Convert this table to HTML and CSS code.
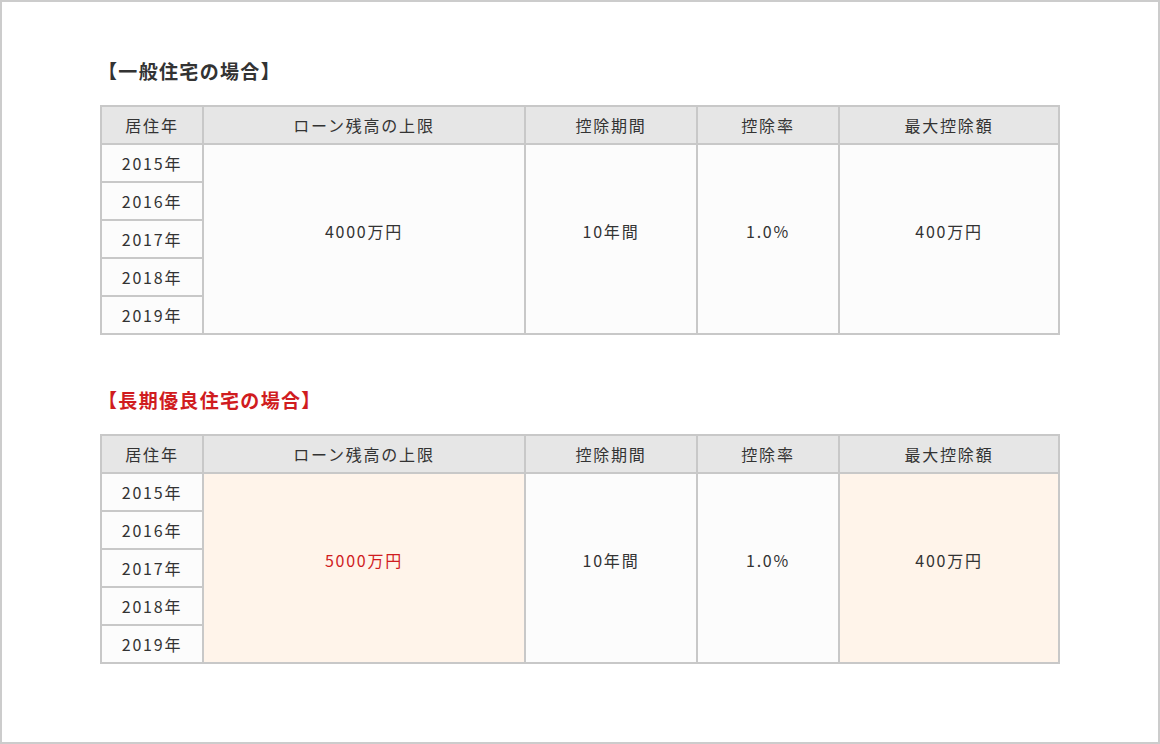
FILE: index.html
```html
<!DOCTYPE html>
<html lang="ja">
<head>
<meta charset="utf-8">
<title>住宅ローン控除</title>
<link rel="stylesheet" href="styles.css">
</head>
<body>
<div class="frame">
  <section class="block">
    <h2 class="title">【一般住宅の場合】</h2>
    <table class="loan">
      <colgroup>
        <col class="c1"><col class="c2"><col class="c3"><col class="c4"><col class="c5">
      </colgroup>
      <thead>
        <tr><th>居住年</th><th>ローン残高の上限</th><th>控除期間</th><th>控除率</th><th>最大控除額</th></tr>
      </thead>
      <tbody>
        <tr><td>2015年</td><td class="span" rowspan="5">4000万円</td><td class="span" rowspan="5">10年間</td><td class="span" rowspan="5">1.0%</td><td class="span" rowspan="5">400万円</td></tr>
        <tr><td>2016年</td></tr>
        <tr><td>2017年</td></tr>
        <tr><td>2018年</td></tr>
        <tr><td>2019年</td></tr>
      </tbody>
    </table>
  </section>
  <section class="block">
    <h2 class="title red">【長期優良住宅の場合】</h2>
    <table class="loan">
      <colgroup>
        <col class="c1"><col class="c2"><col class="c3"><col class="c4"><col class="c5">
      </colgroup>
      <thead>
        <tr><th>居住年</th><th>ローン残高の上限</th><th>控除期間</th><th>控除率</th><th>最大控除額</th></tr>
      </thead>
      <tbody>
        <tr><td>2015年</td><td class="span hl red" rowspan="5">5000万円</td><td class="span" rowspan="5">10年間</td><td class="span" rowspan="5">1.0%</td><td class="span hl" rowspan="5">400万円</td></tr>
        <tr><td>2016年</td></tr>
        <tr><td>2017年</td></tr>
        <tr><td>2018年</td></tr>
        <tr><td>2019年</td></tr>
      </tbody>
    </table>
  </section>
</div>
</body>
</html>
```

FILE: styles.css
```css
html, body {
  margin: 0;
  padding: 0;
  background: #fff;
}
body {
  font-family: "Noto Sans CJK JP", "Noto Sans", sans-serif;
  color: #333;
}
.frame {
  box-sizing: border-box;
  width: 1160px;
  height: 744px;
  border: 2px solid #cccccc;
  padding: 55px 0 0 98px;
}
.block {
  margin-bottom: 51px;
}
.title {
  margin: 0 0 20px -2px;
  font-size: 19px;
  line-height: 28px;
  font-weight: 700;
  letter-spacing: 0.07em;
  color: #333;
}
.title.red {
  color: #d01c1f;
}
.loan {
  width: 960px;
  table-layout: fixed;
  border-collapse: collapse;
  font-size: 16px;
  letter-spacing: 0.11em;
}
.c1 { width: 102px; }
.c2 { width: 322px; }
.c3 { width: 172px; }
.c4 { width: 142px; }
.c5 { width: 220px; }
.loan th,
.loan td {
  border: 2px solid #c8c8c8;
  height: 38px;
  padding: 0;
  text-align: center;
  vertical-align: middle;
  line-height: 20px;
  box-sizing: border-box;
}
.loan th {
  background: #e6e6e6;
  font-weight: 400;
}
.loan td {
  background: #fcfcfc;
}
.loan td.span {
  padding-bottom: 16px;
}
.loan td.hl {
  background: #fff4ea;
}
.loan td.red {
  color: #d01c1f;
}
```
